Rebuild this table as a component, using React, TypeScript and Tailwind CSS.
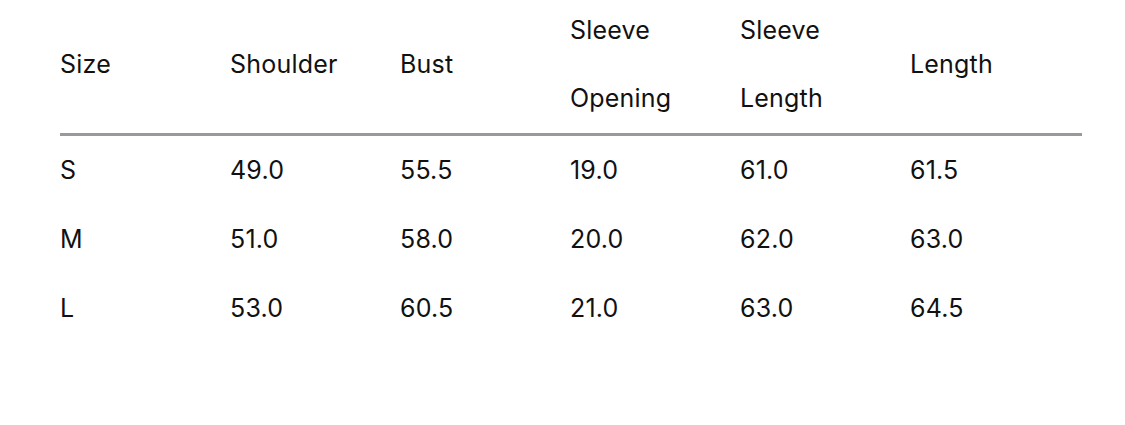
const HEADERS: string[][] = [
  ['Size'],
  ['Shoulder'],
  ['Bust'],
  ['Sleeve', 'Opening'],
  ['Sleeve', 'Length'],
  ['Length'],
];

const ROWS: string[][] = [
  ['S', '49.0', '55.5', '19.0', '61.0', '61.5'],
  ['M', '51.0', '58.0', '20.0', '62.0', '63.0'],
  ['L', '53.0', '60.5', '21.0', '63.0', '64.5'],
];

export default function App() {
  return (
    <div
      className="w-[1125px] h-[425px] bg-white text-[#111111] pl-[60px] text-[25px] tracking-[0.2px]"
      style={{ fontFamily: 'Inter, "Liberation Sans", sans-serif' }}
    >
      <div className="w-[1022px]">
        {/* Header */}
        <div className="grid grid-cols-[170px_170px_170px_170px_170px_172px] h-[128px] items-center">
          {HEADERS.map((h, i) => (
            <div key={i} className="flex flex-col gap-[34px] leading-[34px]">
              {h.map((line, j) => (
                <div key={j}>{line}</div>
              ))}
            </div>
          ))}
        </div>
        <div className="mt-[5px] h-[3px] bg-[#99999d]" />

        {/* Rows */}
        {ROWS.map((row, i) => (
          <div key={i} className="grid grid-cols-[170px_170px_170px_170px_170px_172px] h-[69px] items-center">
            {row.map((cell, j) => (
              <div key={j}>{cell}</div>
            ))}
          </div>
        ))}
      </div>
    </div>
  );
}
